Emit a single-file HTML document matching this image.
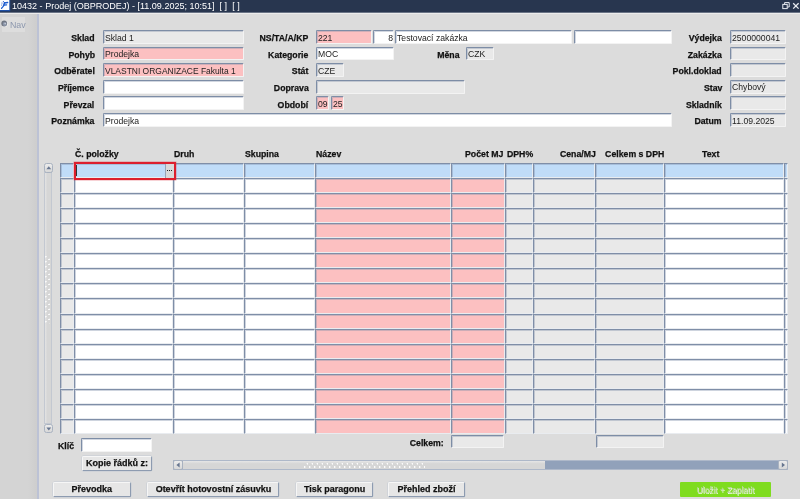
<!DOCTYPE html>
<html lang="cs"><head><meta charset="utf-8"><title>10432 - Prodej (OBPRODEJ)</title>
<style>
html,body{margin:0;padding:0}
body{width:800px;height:499px;overflow:hidden;position:relative;background:#dcdcdc;font-family:"Liberation Sans",sans-serif;}
#tb{position:absolute;left:0;top:0;width:800px;height:12.2px;background:#28364f;border-bottom:.6px solid #6a7486}
#hl{position:absolute;left:0;top:12.8px;width:800px;height:1.3px;background:#ececec}
#tt{position:absolute;left:11.5px;top:0.4px;color:#fff;font-size:9.7px;line-height:12px;white-space:pre;transform:scaleX(.932);transform-origin:0 0}
#nav{position:absolute;left:0;top:12.6px;width:36.6px;height:487px;background:linear-gradient(90deg,#d4d4d4 0,#d4d4d4 28px,#cecece 36px);border-right:2px solid #bcc2d5}
.f{position:absolute;box-sizing:border-box;border:1.1px solid;border-color:#7d8da6 #f3f3f3 #f3f3f3 #7d8da6;border-radius:1.5px;box-shadow:inset 1px 1px 0 rgba(125,141,166,.35)}
.f.c{border-width:1px;border-color:#7f8ea7 #e9ecf0 #e9ecf0 #7f8ea7;border-radius:0;box-shadow:inset 1px 1px 0 rgba(127,142,167,.38)}
.v{position:absolute;top:1.5px;font-size:9.3px;line-height:11.6px;color:#222;white-space:nowrap;transform:scaleX(0.93);transform-origin:0 50%}
.v.r{transform-origin:100% 50%}
.l{position:absolute;-webkit-text-stroke:.25px #111;font-weight:bold;font-size:9.2px;line-height:12px;color:#111;white-space:nowrap;transform:scaleX(0.95);transform-origin:0 50%}
.l.r{transform-origin:100% 50%}
.b{position:absolute;box-sizing:border-box;background:#e6e6e6;border:1.1px solid;border-color:#f6f6f6 #8d9bb0 #8d9bb0 #f6f6f6;border-radius:1.5px;text-align:center;box-shadow:0 0 0 .5px #c4cad3}
.b span{-webkit-text-stroke:.25px #111;position:absolute;left:0;right:0;top:0.1px;font-weight:bold;font-size:9.4px;line-height:12px;color:#111;white-space:nowrap;transform:scaleX(.96)}
.g{position:absolute;background:#7fdc1f;text-align:center;border-radius:1px}
.g span{position:absolute;left:0;right:0;top:1.2px;font-size:9.4px;line-height:12px;color:#bcd7a6;white-space:nowrap;transform:scaleX(.89);text-shadow:.7px .7px 0 #f2f8ec}
.dots{position:absolute;background:#d9d9d9;border-left:1px solid #98a4b6;box-sizing:border-box}
.dots i{position:absolute;top:5.6px;width:1.3px;height:1.4px;background:#222}
#w{position:absolute;left:0;top:0;width:800px;height:499px;will-change:transform}
</style></head><body><div id="w">
<div id="tb"></div>
<svg style="position:absolute;left:0;top:0" width="11" height="12" viewBox="0 0 11 12"><rect width="10.2" height="11.3" fill="#1d4fa6"/><rect width="9.3" height="10" fill="#fbfdff"/><g stroke="#1a5bd0" fill="none" stroke-linecap="round"><path d="M4.3 2.9L7.6 2.5" stroke-width="1.5"/><path d="M4.6 2.8C4.2 5.2 3.2 7 1.6 8.3" stroke-width="1.4"/><path d="M3.6 5.2L6.6 4.8" stroke-width="1.3"/></g><g fill="#2a5cc0"><circle cx="3.4" cy="1.5" r=".6"/><circle cx="2" cy="3" r=".6"/><circle cx="1.7" cy="5" r=".55"/></g></svg>
<div id="tt">10432 - Prodej (OBPRODEJ) - [11.09.2025; 10:51]  [ ]  [ ]</div>
<svg style="position:absolute;left:781px;top:1px" width="19" height="10" viewBox="0 0 19 10"><g fill="none" stroke="#e8ecf2" stroke-width="1"><rect x="1.8" y="3.4" width="4.4" height="4.2"/><path d="M3.6 3.2V1.6H8.2V6H6.4"/><path d="M12.2 2.2L17.6 7.6M17.6 2.2L12.2 7.6" stroke-width="1.3"/></g></svg>
<div id="nav"></div>
<div id="hl"></div>
<div style="position:absolute;left:1.6px;top:17.2px;width:23.4px;height:14.6px;background:#dddddd"></div>
<svg style="position:absolute;left:0;top:19px" width="10" height="10" viewBox="0 0 10 10"><circle cx="4.7" cy="5" r="3" fill="#f4f4f4"/><circle cx="4.2" cy="4.5" r="2.9" fill="#6f7682"/><circle cx="4.7" cy="5" r="2" fill="#8b95a9"/><circle cx="5.2" cy="4.6" r=".8" fill="#c9cfd9"/></svg>
<span style="position:absolute;left:10px;top:18.6px;font-size:9.6px;line-height:12px;color:#8c97ad;transform:scaleX(.92);transform-origin:0 50%">Nav</span>
<span class="l r" style="right:705.4px;top:32.20px">Sklad</span>
<span class="l r" style="right:705.4px;top:48.82px">Pohyb</span>
<span class="l r" style="right:705.4px;top:65.44px">Odběratel</span>
<span class="l r" style="right:705.4px;top:82.06px">Příjemce</span>
<span class="l r" style="right:705.4px;top:98.68px">Převzal</span>
<span class="l r" style="right:705.4px;top:115.30px">Poznámka</span>
<div class="f" style="left:102.5px;top:30.0px;width:141.50px;height:13.80px;background:#e9e9e9"><span class="v" style="left:1.2px">Sklad 1</span></div>
<div class="f" style="left:102.5px;top:46.620000000000005px;width:141.50px;height:13.80px;background:#fcc0c1"><span class="v" style="left:1.2px">Prodejka</span></div>
<div class="f" style="left:102.5px;top:63.24px;width:141.50px;height:13.80px;background:#fcc0c1"><span class="v" style="left:1.2px;transform:scaleX(0.91)">VLASTNI ORGANIZACE Fakulta 1</span></div>
<div class="f" style="left:102.5px;top:79.86px;width:141.50px;height:13.80px;background:#ffffff"></div>
<div class="f" style="left:102.5px;top:96.48px;width:141.50px;height:13.80px;background:#ffffff"></div>
<div class="f" style="left:102.5px;top:113.10000000000001px;width:569.50px;height:13.80px;background:#ffffff"><span class="v" style="left:1.2px">Prodejka</span></div>
<span class="l r" style="right:491.4px;top:32.20px">NS/TA/A/KP</span>
<span class="l r" style="right:491.4px;top:48.82px">Kategorie</span>
<span class="l r" style="right:491.4px;top:65.44px">Stát</span>
<span class="l r" style="right:491.4px;top:82.06px">Doprava</span>
<span class="l r" style="right:491.4px;top:98.68px">Období</span>
<div class="f" style="left:316.2px;top:30.0px;width:56.30px;height:13.80px;background:#fcc0c1"><span class="v" style="left:1.2px">221</span></div>
<div class="f" style="left:373.2px;top:30.0px;width:20.80px;height:13.80px;background:#ffffff"><span class="v r" style="right:0.3px">8</span></div>
<div class="f" style="left:395px;top:30.0px;width:177.00px;height:13.80px;background:#ffffff"><span class="v" style="left:1.2px">Testovací zakázka</span></div>
<div class="f" style="left:573.5px;top:30.0px;width:98.50px;height:13.80px;background:#ffffff"></div>
<div class="f" style="left:316.2px;top:46.620000000000005px;width:77.80px;height:13.80px;background:#ffffff"><span class="v" style="left:1.2px">MOC</span></div>
<span class="l r" style="right:341px;top:48.82px">Měna</span>
<div class="f" style="left:466px;top:46.620000000000005px;width:28.00px;height:13.80px;background:#e9e9e9"><span class="v" style="left:1.2px">CZK</span></div>
<div class="f" style="left:316.2px;top:63.24px;width:27.80px;height:13.80px;background:#e9e9e9"><span class="v" style="left:1.2px">CZE</span></div>
<div class="f" style="left:316.2px;top:79.86px;width:148.80px;height:13.80px;background:#e9e9e9"></div>
<div class="f" style="left:316.2px;top:96.48px;width:13.30px;height:13.80px;background:#fcc0c1"><span class="v" style="left:1.2px">09</span></div>
<div class="f" style="left:330.8px;top:96.48px;width:13.20px;height:13.80px;background:#fcc0c1"><span class="v" style="left:1.2px">25</span></div>
<span class="l r" style="right:78px;top:32.20px">Výdejka</span>
<div class="f" style="left:729.7px;top:30.0px;width:56.30px;height:13.80px;background:#e9e9e9"><span class="v" style="left:1.2px">2500000041</span></div>
<span class="l r" style="right:78px;top:48.82px">Zakázka</span>
<div class="f" style="left:729.7px;top:46.620000000000005px;width:56.30px;height:13.80px;background:#e9e9e9"></div>
<span class="l r" style="right:78px;top:65.44px">Pokl.doklad</span>
<div class="f" style="left:729.7px;top:63.24px;width:56.30px;height:13.80px;background:#e9e9e9"></div>
<span class="l r" style="right:78px;top:82.06px">Stav</span>
<div class="f" style="left:729.7px;top:79.86px;width:56.30px;height:13.80px;background:#e9e9e9"><span class="v" style="left:1.2px">Chybový</span></div>
<span class="l r" style="right:78px;top:98.68px">Skladník</span>
<div class="f" style="left:729.7px;top:96.48px;width:56.30px;height:13.80px;background:#e9e9e9"></div>
<span class="l r" style="right:78px;top:115.30px">Datum</span>
<div class="f" style="left:729.7px;top:113.10000000000001px;width:56.30px;height:13.80px;background:#e9e9e9"><span class="v" style="left:1.2px">11.09.2025</span></div>
<div class="f c" style="left:60px;top:163px;width:14.00px;height:15.00px;background:#c0dcf8"></div>
<div class="f c" style="left:74px;top:163px;width:99.00px;height:15.00px;background:#c0dcf8"></div>
<div class="f c" style="left:173px;top:163px;width:71.00px;height:15.00px;background:#c0dcf8"></div>
<div class="f c" style="left:244px;top:163px;width:71.00px;height:15.00px;background:#c0dcf8"></div>
<div class="f c" style="left:315px;top:163px;width:136.00px;height:15.00px;background:#c0dcf8"></div>
<div class="f c" style="left:451px;top:163px;width:54.00px;height:15.00px;background:#c0dcf8"></div>
<div class="f c" style="left:505px;top:163px;width:28.00px;height:15.00px;background:#c0dcf8"></div>
<div class="f c" style="left:533px;top:163px;width:62.00px;height:15.00px;background:#c0dcf8"></div>
<div class="f c" style="left:595px;top:163px;width:69.00px;height:15.00px;background:#c0dcf8"></div>
<div class="f c" style="left:664px;top:163px;width:120.00px;height:15.00px;background:#c0dcf8"></div>
<div class="f c" style="left:784px;top:163px;width:4.00px;height:15.00px;background:#c0dcf8"></div>
<div class="f c" style="left:60px;top:178px;width:14.00px;height:15.00px;background:#e9e9e9"></div>
<div class="f c" style="left:74px;top:178px;width:99.00px;height:15.00px;background:#ffffff"></div>
<div class="f c" style="left:173px;top:178px;width:71.00px;height:15.00px;background:#ffffff"></div>
<div class="f c" style="left:244px;top:178px;width:71.00px;height:15.00px;background:#ffffff"></div>
<div class="f c" style="left:315px;top:178px;width:136.00px;height:15.00px;background:#fcc0c1"></div>
<div class="f c" style="left:451px;top:178px;width:54.00px;height:15.00px;background:#fcc0c1"></div>
<div class="f c" style="left:505px;top:178px;width:28.00px;height:15.00px;background:#e9e9e9"></div>
<div class="f c" style="left:533px;top:178px;width:62.00px;height:15.00px;background:#e9e9e9"></div>
<div class="f c" style="left:595px;top:178px;width:69.00px;height:15.00px;background:#e9e9e9"></div>
<div class="f c" style="left:664px;top:178px;width:120.00px;height:15.00px;background:#ffffff"></div>
<div class="f c" style="left:784px;top:178px;width:4.00px;height:15.00px;background:#ffffff"></div>
<div class="f c" style="left:60px;top:193px;width:14.00px;height:15.00px;background:#e9e9e9"></div>
<div class="f c" style="left:74px;top:193px;width:99.00px;height:15.00px;background:#ffffff"></div>
<div class="f c" style="left:173px;top:193px;width:71.00px;height:15.00px;background:#ffffff"></div>
<div class="f c" style="left:244px;top:193px;width:71.00px;height:15.00px;background:#ffffff"></div>
<div class="f c" style="left:315px;top:193px;width:136.00px;height:15.00px;background:#fcc0c1"></div>
<div class="f c" style="left:451px;top:193px;width:54.00px;height:15.00px;background:#fcc0c1"></div>
<div class="f c" style="left:505px;top:193px;width:28.00px;height:15.00px;background:#e9e9e9"></div>
<div class="f c" style="left:533px;top:193px;width:62.00px;height:15.00px;background:#e9e9e9"></div>
<div class="f c" style="left:595px;top:193px;width:69.00px;height:15.00px;background:#e9e9e9"></div>
<div class="f c" style="left:664px;top:193px;width:120.00px;height:15.00px;background:#ffffff"></div>
<div class="f c" style="left:784px;top:193px;width:4.00px;height:15.00px;background:#ffffff"></div>
<div class="f c" style="left:60px;top:208px;width:14.00px;height:15.00px;background:#e9e9e9"></div>
<div class="f c" style="left:74px;top:208px;width:99.00px;height:15.00px;background:#ffffff"></div>
<div class="f c" style="left:173px;top:208px;width:71.00px;height:15.00px;background:#ffffff"></div>
<div class="f c" style="left:244px;top:208px;width:71.00px;height:15.00px;background:#ffffff"></div>
<div class="f c" style="left:315px;top:208px;width:136.00px;height:15.00px;background:#fcc0c1"></div>
<div class="f c" style="left:451px;top:208px;width:54.00px;height:15.00px;background:#fcc0c1"></div>
<div class="f c" style="left:505px;top:208px;width:28.00px;height:15.00px;background:#e9e9e9"></div>
<div class="f c" style="left:533px;top:208px;width:62.00px;height:15.00px;background:#e9e9e9"></div>
<div class="f c" style="left:595px;top:208px;width:69.00px;height:15.00px;background:#e9e9e9"></div>
<div class="f c" style="left:664px;top:208px;width:120.00px;height:15.00px;background:#ffffff"></div>
<div class="f c" style="left:784px;top:208px;width:4.00px;height:15.00px;background:#ffffff"></div>
<div class="f c" style="left:60px;top:223px;width:14.00px;height:15.00px;background:#e9e9e9"></div>
<div class="f c" style="left:74px;top:223px;width:99.00px;height:15.00px;background:#ffffff"></div>
<div class="f c" style="left:173px;top:223px;width:71.00px;height:15.00px;background:#ffffff"></div>
<div class="f c" style="left:244px;top:223px;width:71.00px;height:15.00px;background:#ffffff"></div>
<div class="f c" style="left:315px;top:223px;width:136.00px;height:15.00px;background:#fcc0c1"></div>
<div class="f c" style="left:451px;top:223px;width:54.00px;height:15.00px;background:#fcc0c1"></div>
<div class="f c" style="left:505px;top:223px;width:28.00px;height:15.00px;background:#e9e9e9"></div>
<div class="f c" style="left:533px;top:223px;width:62.00px;height:15.00px;background:#e9e9e9"></div>
<div class="f c" style="left:595px;top:223px;width:69.00px;height:15.00px;background:#e9e9e9"></div>
<div class="f c" style="left:664px;top:223px;width:120.00px;height:15.00px;background:#ffffff"></div>
<div class="f c" style="left:784px;top:223px;width:4.00px;height:15.00px;background:#ffffff"></div>
<div class="f c" style="left:60px;top:238px;width:14.00px;height:15.00px;background:#e9e9e9"></div>
<div class="f c" style="left:74px;top:238px;width:99.00px;height:15.00px;background:#ffffff"></div>
<div class="f c" style="left:173px;top:238px;width:71.00px;height:15.00px;background:#ffffff"></div>
<div class="f c" style="left:244px;top:238px;width:71.00px;height:15.00px;background:#ffffff"></div>
<div class="f c" style="left:315px;top:238px;width:136.00px;height:15.00px;background:#fcc0c1"></div>
<div class="f c" style="left:451px;top:238px;width:54.00px;height:15.00px;background:#fcc0c1"></div>
<div class="f c" style="left:505px;top:238px;width:28.00px;height:15.00px;background:#e9e9e9"></div>
<div class="f c" style="left:533px;top:238px;width:62.00px;height:15.00px;background:#e9e9e9"></div>
<div class="f c" style="left:595px;top:238px;width:69.00px;height:15.00px;background:#e9e9e9"></div>
<div class="f c" style="left:664px;top:238px;width:120.00px;height:15.00px;background:#ffffff"></div>
<div class="f c" style="left:784px;top:238px;width:4.00px;height:15.00px;background:#ffffff"></div>
<div class="f c" style="left:60px;top:253px;width:14.00px;height:15.00px;background:#e9e9e9"></div>
<div class="f c" style="left:74px;top:253px;width:99.00px;height:15.00px;background:#ffffff"></div>
<div class="f c" style="left:173px;top:253px;width:71.00px;height:15.00px;background:#ffffff"></div>
<div class="f c" style="left:244px;top:253px;width:71.00px;height:15.00px;background:#ffffff"></div>
<div class="f c" style="left:315px;top:253px;width:136.00px;height:15.00px;background:#fcc0c1"></div>
<div class="f c" style="left:451px;top:253px;width:54.00px;height:15.00px;background:#fcc0c1"></div>
<div class="f c" style="left:505px;top:253px;width:28.00px;height:15.00px;background:#e9e9e9"></div>
<div class="f c" style="left:533px;top:253px;width:62.00px;height:15.00px;background:#e9e9e9"></div>
<div class="f c" style="left:595px;top:253px;width:69.00px;height:15.00px;background:#e9e9e9"></div>
<div class="f c" style="left:664px;top:253px;width:120.00px;height:15.00px;background:#ffffff"></div>
<div class="f c" style="left:784px;top:253px;width:4.00px;height:15.00px;background:#ffffff"></div>
<div class="f c" style="left:60px;top:268px;width:14.00px;height:15.00px;background:#e9e9e9"></div>
<div class="f c" style="left:74px;top:268px;width:99.00px;height:15.00px;background:#ffffff"></div>
<div class="f c" style="left:173px;top:268px;width:71.00px;height:15.00px;background:#ffffff"></div>
<div class="f c" style="left:244px;top:268px;width:71.00px;height:15.00px;background:#ffffff"></div>
<div class="f c" style="left:315px;top:268px;width:136.00px;height:15.00px;background:#fcc0c1"></div>
<div class="f c" style="left:451px;top:268px;width:54.00px;height:15.00px;background:#fcc0c1"></div>
<div class="f c" style="left:505px;top:268px;width:28.00px;height:15.00px;background:#e9e9e9"></div>
<div class="f c" style="left:533px;top:268px;width:62.00px;height:15.00px;background:#e9e9e9"></div>
<div class="f c" style="left:595px;top:268px;width:69.00px;height:15.00px;background:#e9e9e9"></div>
<div class="f c" style="left:664px;top:268px;width:120.00px;height:15.00px;background:#ffffff"></div>
<div class="f c" style="left:784px;top:268px;width:4.00px;height:15.00px;background:#ffffff"></div>
<div class="f c" style="left:60px;top:283px;width:14.00px;height:15.00px;background:#e9e9e9"></div>
<div class="f c" style="left:74px;top:283px;width:99.00px;height:15.00px;background:#ffffff"></div>
<div class="f c" style="left:173px;top:283px;width:71.00px;height:15.00px;background:#ffffff"></div>
<div class="f c" style="left:244px;top:283px;width:71.00px;height:15.00px;background:#ffffff"></div>
<div class="f c" style="left:315px;top:283px;width:136.00px;height:15.00px;background:#fcc0c1"></div>
<div class="f c" style="left:451px;top:283px;width:54.00px;height:15.00px;background:#fcc0c1"></div>
<div class="f c" style="left:505px;top:283px;width:28.00px;height:15.00px;background:#e9e9e9"></div>
<div class="f c" style="left:533px;top:283px;width:62.00px;height:15.00px;background:#e9e9e9"></div>
<div class="f c" style="left:595px;top:283px;width:69.00px;height:15.00px;background:#e9e9e9"></div>
<div class="f c" style="left:664px;top:283px;width:120.00px;height:15.00px;background:#ffffff"></div>
<div class="f c" style="left:784px;top:283px;width:4.00px;height:15.00px;background:#ffffff"></div>
<div class="f c" style="left:60px;top:298px;width:14.00px;height:16.00px;background:#e9e9e9"></div>
<div class="f c" style="left:74px;top:298px;width:99.00px;height:16.00px;background:#ffffff"></div>
<div class="f c" style="left:173px;top:298px;width:71.00px;height:16.00px;background:#ffffff"></div>
<div class="f c" style="left:244px;top:298px;width:71.00px;height:16.00px;background:#ffffff"></div>
<div class="f c" style="left:315px;top:298px;width:136.00px;height:16.00px;background:#fcc0c1"></div>
<div class="f c" style="left:451px;top:298px;width:54.00px;height:16.00px;background:#fcc0c1"></div>
<div class="f c" style="left:505px;top:298px;width:28.00px;height:16.00px;background:#e9e9e9"></div>
<div class="f c" style="left:533px;top:298px;width:62.00px;height:16.00px;background:#e9e9e9"></div>
<div class="f c" style="left:595px;top:298px;width:69.00px;height:16.00px;background:#e9e9e9"></div>
<div class="f c" style="left:664px;top:298px;width:120.00px;height:16.00px;background:#ffffff"></div>
<div class="f c" style="left:784px;top:298px;width:4.00px;height:16.00px;background:#ffffff"></div>
<div class="f c" style="left:60px;top:314px;width:14.00px;height:15.00px;background:#e9e9e9"></div>
<div class="f c" style="left:74px;top:314px;width:99.00px;height:15.00px;background:#ffffff"></div>
<div class="f c" style="left:173px;top:314px;width:71.00px;height:15.00px;background:#ffffff"></div>
<div class="f c" style="left:244px;top:314px;width:71.00px;height:15.00px;background:#ffffff"></div>
<div class="f c" style="left:315px;top:314px;width:136.00px;height:15.00px;background:#fcc0c1"></div>
<div class="f c" style="left:451px;top:314px;width:54.00px;height:15.00px;background:#fcc0c1"></div>
<div class="f c" style="left:505px;top:314px;width:28.00px;height:15.00px;background:#e9e9e9"></div>
<div class="f c" style="left:533px;top:314px;width:62.00px;height:15.00px;background:#e9e9e9"></div>
<div class="f c" style="left:595px;top:314px;width:69.00px;height:15.00px;background:#e9e9e9"></div>
<div class="f c" style="left:664px;top:314px;width:120.00px;height:15.00px;background:#ffffff"></div>
<div class="f c" style="left:784px;top:314px;width:4.00px;height:15.00px;background:#ffffff"></div>
<div class="f c" style="left:60px;top:329px;width:14.00px;height:15.00px;background:#e9e9e9"></div>
<div class="f c" style="left:74px;top:329px;width:99.00px;height:15.00px;background:#ffffff"></div>
<div class="f c" style="left:173px;top:329px;width:71.00px;height:15.00px;background:#ffffff"></div>
<div class="f c" style="left:244px;top:329px;width:71.00px;height:15.00px;background:#ffffff"></div>
<div class="f c" style="left:315px;top:329px;width:136.00px;height:15.00px;background:#fcc0c1"></div>
<div class="f c" style="left:451px;top:329px;width:54.00px;height:15.00px;background:#fcc0c1"></div>
<div class="f c" style="left:505px;top:329px;width:28.00px;height:15.00px;background:#e9e9e9"></div>
<div class="f c" style="left:533px;top:329px;width:62.00px;height:15.00px;background:#e9e9e9"></div>
<div class="f c" style="left:595px;top:329px;width:69.00px;height:15.00px;background:#e9e9e9"></div>
<div class="f c" style="left:664px;top:329px;width:120.00px;height:15.00px;background:#ffffff"></div>
<div class="f c" style="left:784px;top:329px;width:4.00px;height:15.00px;background:#ffffff"></div>
<div class="f c" style="left:60px;top:344px;width:14.00px;height:15.00px;background:#e9e9e9"></div>
<div class="f c" style="left:74px;top:344px;width:99.00px;height:15.00px;background:#ffffff"></div>
<div class="f c" style="left:173px;top:344px;width:71.00px;height:15.00px;background:#ffffff"></div>
<div class="f c" style="left:244px;top:344px;width:71.00px;height:15.00px;background:#ffffff"></div>
<div class="f c" style="left:315px;top:344px;width:136.00px;height:15.00px;background:#fcc0c1"></div>
<div class="f c" style="left:451px;top:344px;width:54.00px;height:15.00px;background:#fcc0c1"></div>
<div class="f c" style="left:505px;top:344px;width:28.00px;height:15.00px;background:#e9e9e9"></div>
<div class="f c" style="left:533px;top:344px;width:62.00px;height:15.00px;background:#e9e9e9"></div>
<div class="f c" style="left:595px;top:344px;width:69.00px;height:15.00px;background:#e9e9e9"></div>
<div class="f c" style="left:664px;top:344px;width:120.00px;height:15.00px;background:#ffffff"></div>
<div class="f c" style="left:784px;top:344px;width:4.00px;height:15.00px;background:#ffffff"></div>
<div class="f c" style="left:60px;top:359px;width:14.00px;height:15.00px;background:#e9e9e9"></div>
<div class="f c" style="left:74px;top:359px;width:99.00px;height:15.00px;background:#ffffff"></div>
<div class="f c" style="left:173px;top:359px;width:71.00px;height:15.00px;background:#ffffff"></div>
<div class="f c" style="left:244px;top:359px;width:71.00px;height:15.00px;background:#ffffff"></div>
<div class="f c" style="left:315px;top:359px;width:136.00px;height:15.00px;background:#fcc0c1"></div>
<div class="f c" style="left:451px;top:359px;width:54.00px;height:15.00px;background:#fcc0c1"></div>
<div class="f c" style="left:505px;top:359px;width:28.00px;height:15.00px;background:#e9e9e9"></div>
<div class="f c" style="left:533px;top:359px;width:62.00px;height:15.00px;background:#e9e9e9"></div>
<div class="f c" style="left:595px;top:359px;width:69.00px;height:15.00px;background:#e9e9e9"></div>
<div class="f c" style="left:664px;top:359px;width:120.00px;height:15.00px;background:#ffffff"></div>
<div class="f c" style="left:784px;top:359px;width:4.00px;height:15.00px;background:#ffffff"></div>
<div class="f c" style="left:60px;top:374px;width:14.00px;height:15.00px;background:#e9e9e9"></div>
<div class="f c" style="left:74px;top:374px;width:99.00px;height:15.00px;background:#ffffff"></div>
<div class="f c" style="left:173px;top:374px;width:71.00px;height:15.00px;background:#ffffff"></div>
<div class="f c" style="left:244px;top:374px;width:71.00px;height:15.00px;background:#ffffff"></div>
<div class="f c" style="left:315px;top:374px;width:136.00px;height:15.00px;background:#fcc0c1"></div>
<div class="f c" style="left:451px;top:374px;width:54.00px;height:15.00px;background:#fcc0c1"></div>
<div class="f c" style="left:505px;top:374px;width:28.00px;height:15.00px;background:#e9e9e9"></div>
<div class="f c" style="left:533px;top:374px;width:62.00px;height:15.00px;background:#e9e9e9"></div>
<div class="f c" style="left:595px;top:374px;width:69.00px;height:15.00px;background:#e9e9e9"></div>
<div class="f c" style="left:664px;top:374px;width:120.00px;height:15.00px;background:#ffffff"></div>
<div class="f c" style="left:784px;top:374px;width:4.00px;height:15.00px;background:#ffffff"></div>
<div class="f c" style="left:60px;top:389px;width:14.00px;height:15.00px;background:#e9e9e9"></div>
<div class="f c" style="left:74px;top:389px;width:99.00px;height:15.00px;background:#ffffff"></div>
<div class="f c" style="left:173px;top:389px;width:71.00px;height:15.00px;background:#ffffff"></div>
<div class="f c" style="left:244px;top:389px;width:71.00px;height:15.00px;background:#ffffff"></div>
<div class="f c" style="left:315px;top:389px;width:136.00px;height:15.00px;background:#fcc0c1"></div>
<div class="f c" style="left:451px;top:389px;width:54.00px;height:15.00px;background:#fcc0c1"></div>
<div class="f c" style="left:505px;top:389px;width:28.00px;height:15.00px;background:#e9e9e9"></div>
<div class="f c" style="left:533px;top:389px;width:62.00px;height:15.00px;background:#e9e9e9"></div>
<div class="f c" style="left:595px;top:389px;width:69.00px;height:15.00px;background:#e9e9e9"></div>
<div class="f c" style="left:664px;top:389px;width:120.00px;height:15.00px;background:#ffffff"></div>
<div class="f c" style="left:784px;top:389px;width:4.00px;height:15.00px;background:#ffffff"></div>
<div class="f c" style="left:60px;top:404px;width:14.00px;height:15.00px;background:#e9e9e9"></div>
<div class="f c" style="left:74px;top:404px;width:99.00px;height:15.00px;background:#ffffff"></div>
<div class="f c" style="left:173px;top:404px;width:71.00px;height:15.00px;background:#ffffff"></div>
<div class="f c" style="left:244px;top:404px;width:71.00px;height:15.00px;background:#ffffff"></div>
<div class="f c" style="left:315px;top:404px;width:136.00px;height:15.00px;background:#fcc0c1"></div>
<div class="f c" style="left:451px;top:404px;width:54.00px;height:15.00px;background:#fcc0c1"></div>
<div class="f c" style="left:505px;top:404px;width:28.00px;height:15.00px;background:#e9e9e9"></div>
<div class="f c" style="left:533px;top:404px;width:62.00px;height:15.00px;background:#e9e9e9"></div>
<div class="f c" style="left:595px;top:404px;width:69.00px;height:15.00px;background:#e9e9e9"></div>
<div class="f c" style="left:664px;top:404px;width:120.00px;height:15.00px;background:#ffffff"></div>
<div class="f c" style="left:784px;top:404px;width:4.00px;height:15.00px;background:#ffffff"></div>
<div class="f c" style="left:60px;top:419px;width:14.00px;height:15.00px;background:#e9e9e9"></div>
<div class="f c" style="left:74px;top:419px;width:99.00px;height:15.00px;background:#ffffff"></div>
<div class="f c" style="left:173px;top:419px;width:71.00px;height:15.00px;background:#ffffff"></div>
<div class="f c" style="left:244px;top:419px;width:71.00px;height:15.00px;background:#ffffff"></div>
<div class="f c" style="left:315px;top:419px;width:136.00px;height:15.00px;background:#fcc0c1"></div>
<div class="f c" style="left:451px;top:419px;width:54.00px;height:15.00px;background:#fcc0c1"></div>
<div class="f c" style="left:505px;top:419px;width:28.00px;height:15.00px;background:#e9e9e9"></div>
<div class="f c" style="left:533px;top:419px;width:62.00px;height:15.00px;background:#e9e9e9"></div>
<div class="f c" style="left:595px;top:419px;width:69.00px;height:15.00px;background:#e9e9e9"></div>
<div class="f c" style="left:664px;top:419px;width:120.00px;height:15.00px;background:#ffffff"></div>
<div class="f c" style="left:784px;top:419px;width:4.00px;height:15.00px;background:#ffffff"></div>
<div class="dots" style="left:165px;top:164px;width:9px;height:14px"><i style="left:1.2px"></i><i style="left:3.1px"></i><i style="left:5px"></i></div>
<div style="position:absolute;left:74px;top:162px;width:98px;height:14px;border:2px solid #dc1f2e;box-shadow:0 0 0 .4px rgba(220,31,46,.5)"></div>
<div style="position:absolute;left:76px;top:164.6px;width:.9px;height:11.4px;background:#333"></div>
<span class="l" style="left:74.5px;top:147.70px">Č. položky</span>
<span class="l" style="left:174px;top:147.70px">Druh</span>
<span class="l" style="left:245px;top:147.70px">Skupina</span>
<span class="l" style="left:315.8px;top:147.70px">Název</span>
<span class="l r" style="right:297px;top:147.70px">Počet MJ</span>
<span class="l" style="left:506.8px;top:147.70px">DPH%</span>
<span class="l r" style="right:204.70000000000005px;top:147.70px">Cena/MJ</span>
<span class="l r" style="right:135.70000000000005px;top:147.70px">Celkem s DPH</span>
<span class="l" style="left:702px;top:147.70px">Text</span>
<span class="l" style="left:58px;top:439.80px">Klíč</span>
<div class="f" style="left:81px;top:437.5px;width:71.00px;height:14.10px;background:#ffffff"></div>
<span class="l r" style="right:356px;top:436.80px">Celkem:</span>
<div class="f" style="left:451.4px;top:434.6px;width:52.60px;height:13.40px;background:#e9e9e9"></div>
<div class="f" style="left:595.5px;top:434.5px;width:68.70px;height:13.50px;background:#e9e9e9"></div>
<div class="b" style="left:82px;top:455.5px;width:70.00px;height:15.10px;"><span>Kopie řádků z:</span></div>
<div class="b" style="left:53.3px;top:482px;width:77.30px;height:15.00px;"><span>Převodka</span></div>
<div class="b" style="left:146.5px;top:482px;width:132.80px;height:15.00px;"><span>Otevřít hotovostní zásuvku</span></div>
<div class="b" style="left:295.7px;top:482px;width:77.30px;height:15.00px;"><span>Tisk paragonu</span></div>
<div class="b" style="left:388px;top:482px;width:77.00px;height:15.00px;"><span>Přehled zboží</span></div>
<div class="g" style="left:680.4px;top:482.4px;width:91px;height:14.6px"><span>Uložit + Zaplatit</span></div>
<!-- vertical scrollbar -->
<div style="position:absolute;left:44.2px;top:172.4px;width:8.2px;height:251.6px;background:linear-gradient(90deg,#e3e3e3,#d6d6d6 40%,#d6d6d6);border:.8px solid #c3c8d1;box-sizing:border-box"></div>
<div style="position:absolute;left:43.5px;top:163px;width:9.6px;height:9.6px;background:linear-gradient(#ececec,#d8d8d8);border:.8px solid #a9b2c0;border-radius:2.4px;box-sizing:border-box"></div>
<div style="position:absolute;left:43.5px;top:423.7px;width:9.6px;height:9.6px;background:linear-gradient(#ececec,#d8d8d8);border:.8px solid #a9b2c0;border-radius:2.4px;box-sizing:border-box"></div>
<svg style="position:absolute;left:43.5px;top:163px" width="10" height="10"><path d="M2.4 6.3L4.8 3.3L7.2 6.3Z" fill="#66758f"/></svg>
<svg style="position:absolute;left:43.5px;top:423.7px" width="10" height="10"><path d="M2.4 3.5L4.8 6.5L7.2 3.5Z" fill="#66758f"/></svg>
<!-- horizontal scrollbar -->
<div style="position:absolute;left:173px;top:459.8px;width:615px;height:10.4px;background:#91a1ba;border:1px solid #aeb8c9;box-sizing:border-box"></div>
<div style="position:absolute;left:183px;top:460.6px;width:361.6px;height:8.8px;background:linear-gradient(#e6e6e6,#d6d6d6 35%,#d6d6d6);box-sizing:border-box"></div>
<div style="position:absolute;left:173px;top:459.8px;width:10.2px;height:10.4px;background:linear-gradient(#ececec,#d8d8d8);border:.9px solid #a9b2c0;border-radius:2px;box-sizing:border-box"></div>
<div style="position:absolute;left:777.8px;top:459.8px;width:10.2px;height:10.4px;background:linear-gradient(#ececec,#d8d8d8);border:.9px solid #a9b2c0;border-radius:2px;box-sizing:border-box"></div>
<svg style="position:absolute;left:173px;top:460px" width="10" height="10"><path d="M6.6 2.4L3.4 5L6.6 7.6Z" fill="#66758f"/></svg>
<svg style="position:absolute;left:778px;top:460px" width="10" height="10"><path d="M3.8 2.4L7 5L3.8 7.6Z" fill="#66758f"/></svg>
<div style="position:absolute;left:303.6px;top:462.6px;width:121px;height:5px;background-image:radial-gradient(circle at 3.3px .8px,#fafafa .6px,transparent 1px),radial-gradient(circle at .8px 4px,#fafafa .6px,transparent 1px);background-size:5px 5px;"></div>
<div style="position:absolute;left:45.4px;top:255.8px;width:5px;height:68px;background-image:radial-gradient(circle at .85px .8px,#fafafa .6px,transparent 1px),radial-gradient(circle at 4.1px 3.3px,#fafafa .6px,transparent 1px);background-size:5px 5px;"></div>
</div></body></html>
